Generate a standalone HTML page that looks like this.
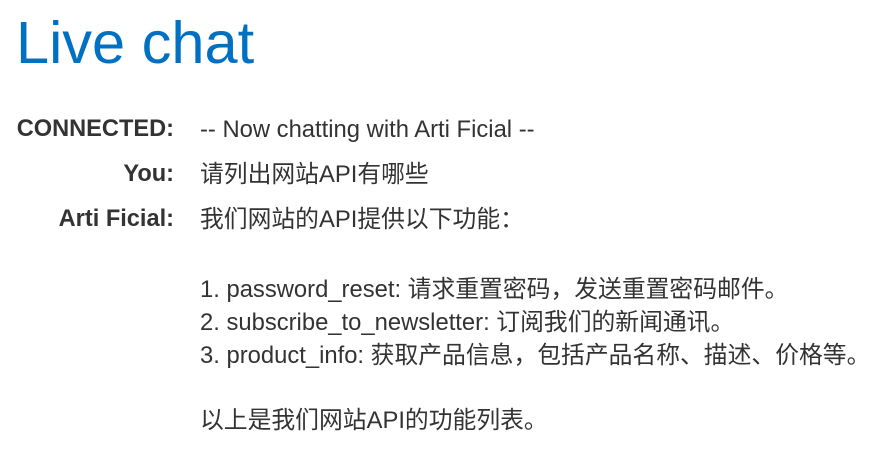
<!DOCTYPE html>
<html><head><meta charset="utf-8"><style>
body{margin:0;width:874px;height:455px;background:#fff;overflow:hidden;font-family:"Liberation Sans","Noto Sans CJK SC",sans-serif;color:#333;}
h1{position:absolute;left:16px;top:3px;margin:0;font-weight:normal;font-size:59.5px;line-height:80px;color:#0071c2;}
.l{position:absolute;right:700px;font-weight:bold;font-size:23.6px;line-height:33px;text-align:right;white-space:nowrap;}
.t{position:absolute;left:200px;font-size:23.8px;line-height:33px;white-space:nowrap;}
</style></head><body>
<h1>Live chat</h1>
<div class="l" style="top:113px">CONNECTED:</div>
<div class="t" style="top:113px">-- Now chatting with Arti Ficial --</div>
<div class="l" style="top:158px">You:</div>
<div class="t" style="top:158px">请列出网站API有哪些</div>
<div class="l" style="top:203px">Arti Ficial:</div>
<div class="t" style="top:203px">我们网站的API提供以下功能：</div>
<div class="t" style="top:273px">1. password_reset: 请求重置密码，发送重置密码邮件。</div>
<div class="t" style="top:306px">2. subscribe_to_newsletter: 订阅我们的新闻通讯。</div>
<div class="t" style="top:339px">3. product_info: 获取产品信息，包括产品名称、描述、价格等。</div>
<div class="t" style="top:404px">以上是我们网站API的功能列表。</div>
</body></html>
